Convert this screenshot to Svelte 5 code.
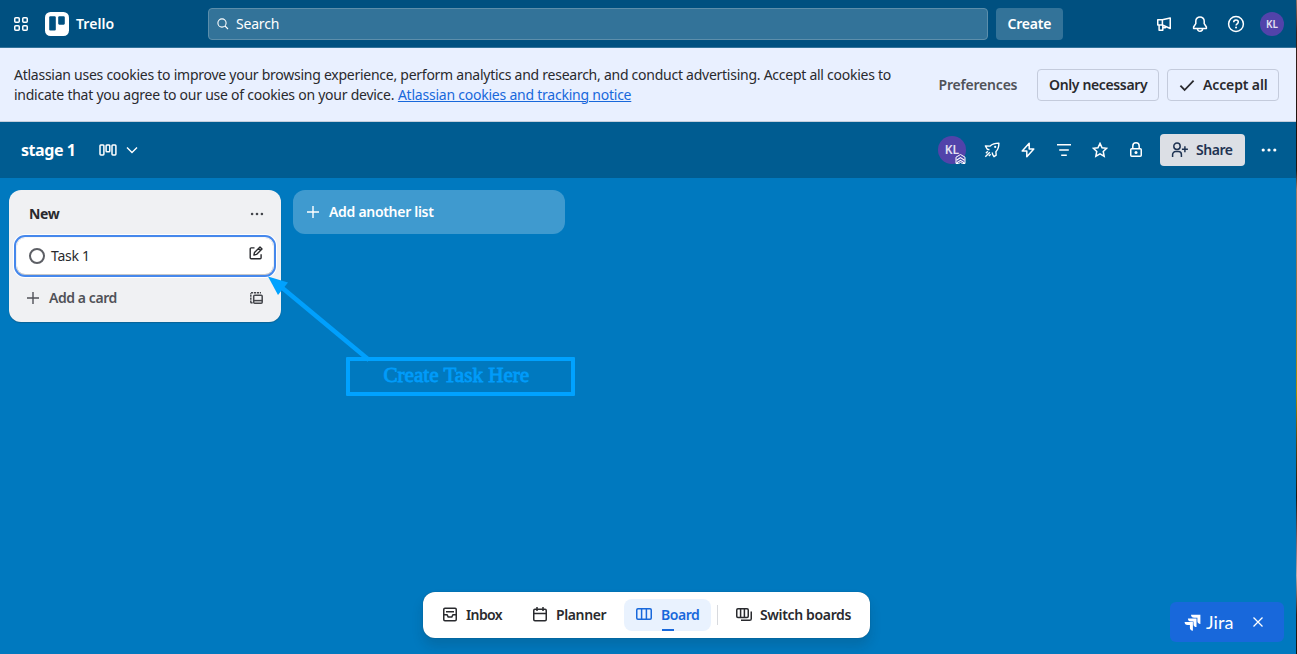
<script>
  let tab = $state('Board');
</script>

{#snippet label(text, width, spacing, cls = '')}
  <span class="label {cls}" style="width:{width}px;letter-spacing:{spacing}px">{text}</span>
{/snippet}

<div class="screen">
  <div class="app">
    <header class="top">
      <svg class="apps" width="16" height="16" viewBox="0 0 16 16" fill="none" stroke="#fff" stroke-width="1.5">
        <rect x="1.75" y="1.75" width="4.5" height="4.5" rx="1" /><rect x="9.75" y="1.75" width="4.5" height="4.5" rx="1" />
        <rect x="1.75" y="9.75" width="4.5" height="4.5" rx="1" /><rect x="9.75" y="9.75" width="4.5" height="4.5" rx="1" />
      </svg>
      <svg class="logo" width="24" height="24" viewBox="0 0 24 24">
        <rect width="24" height="24" rx="5.5" fill="#fff" />
        <rect x="4.2" y="4.3" width="6.6" height="14.2" rx="1.1" fill="#005080" /><rect x="13.2" y="4.3" width="6.6" height="8.4" rx="1.1" fill="#005080" />
      </svg>
      {@render label('Trello', 40, 0.05, 'med')}
      <div class="search">
        <svg width="12" height="12" viewBox="0 0 12 12" fill="none" stroke="#fff" stroke-width="1.1"><circle cx="5" cy="5" r="4.1" /><path d="M8 8l3 3" /></svg>
        {@render label('Search', 44, -0.2)}
      </div>
      <button class="create">{@render label('Create', 44, -0.22, 'med')}</button>
      <div class="tools">
        <svg width="16" height="16" viewBox="0 0 16 16" fill="none" stroke="#fff" stroke-width="1.5" stroke-linejoin="round">
          <path d="M6.4 3.8H1.75V9H6.4zM6.4 3.8L14.25 1.9v10.6L6.4 9M3.1 9.2v5.05h3.7V9.4M7 11.8h2.3v-1.4" />
        </svg>
        <svg width="16" height="16" viewBox="0 0 16 16" fill="none" stroke="#fff" stroke-width="1.5" stroke-linejoin="round">
          <path d="M8 .9a4.2 4.2 0 0 0-4.2 4.2v2.6L1.6 11v1.5h12.8V11l-2.2-3.3V5.1A4.2 4.2 0 0 0 8 .9zM5.4 12.8a2.6 2.4 0 0 0 5.2 0" />
        </svg>
        <svg width="18" height="18" viewBox="0 0 18 18" fill="none" stroke="#fff" stroke-width="1.5">
          <circle cx="9" cy="9" r="7.4" /><path d="M6.7 7.3C6.7 5.8 7.7 5 9 5s2.3.8 2.3 2.1c0 1.7-2.2 1.7-2.2 3.4" /><circle cx="9.05" cy="12.6" r="1" fill="#fff" stroke="none" />
        </svg>
        <span class="avatar small">KL</span>
      </div>
    </header>

    <section class="cookies">
      <p>
        <span class="line1">Atlassian uses cookies to improve your browsing experience, perform analytics and research, and conduct advertising. Accept all cookies to</span><br />
        <span class="line2">indicate that you agree to our use of cookies on your device.</span>
        <a href="#notice">Atlassian cookies and tracking notice</a>
      </p>
      <button class="plain">{@render label('Preferences', 79, -0.2, 'med')}</button>
      <button class="outlined">{@render label('Only necessary', 98, -0.36, 'med')}</button>
      <button class="outlined accept">
        <svg width="16" height="16" viewBox="0 0 16 16" fill="none" stroke="#292a2e" stroke-width="1.8"><path d="M1.4 8.7L5.6 13 14.6 3.6" /></svg>
        {@render label('Accept all', 64, -0.13, 'med')}
      </button>
    </section>

    <section class="boardbar">
      <h1>stage 1</h1>
      <svg class="view" width="18" height="12" viewBox="0 0 18 12" fill="none" stroke="#fff" stroke-width="1.5">
        <rect x="1" y=".9" width="3.9" height="10" rx=".8" /><rect x="7.1" y=".9" width="3.7" height="6.8" rx=".8" /><rect x="13" y=".9" width="3.9" height="10" rx=".8" />
      </svg>
      <svg class="chev" width="12" height="8" viewBox="0 0 12 8" fill="none" stroke="#fff" stroke-width="1.4"><path d="M1 1.4l5 5 5-5" /></svg>
      <div class="actions">
        <span class="avatar">KL
          <svg class="rank" width="11" height="10" viewBox="0 0 11 10"><path d="M1 3.2L5.5.5 10 3.2V9.5H7.4L5.5 8.4 3.6 9.5H1z" fill="#4d4bab" stroke="#fff" stroke-width="1" /><path d="M1.5 6.2l4-2.6 4 2.6M1.5 9l4-2.6 4 2.6" fill="none" stroke="#fff" stroke-width="1.1" /></svg>
        </span>
        <svg width="16" height="16" viewBox="0 0 16 16" fill="none" stroke="#fff" stroke-width="1.4" stroke-linejoin="round">
          <path d="M3.4 7.4L1.4 3.9 6.2 4.1C8.2 2 10.8 1.1 14.9 1.1 14.9 5.2 14 7.8 11.9 9.8L12.2 13.2 10 14.7 8.6 12.4M3.2 7.3l2.2.4M8.6 12.6L8.3 10.5M5.8 10.2L1.3 14.7M3.8 9.3L1.9 11.2M6.7 12.2L4.8 14.1" /><circle cx="11.2" cy="4.9" r="1.1" fill="#fff" stroke="none" />
        </svg>
        <svg width="16" height="16" viewBox="0 0 16 16" fill="none" stroke="#fff" stroke-width="1.5" stroke-linejoin="round"><path d="M9.2 1.2L2.2 9h4.6v5.8L13.8 7H9.2z" /></svg>
        <svg width="16" height="16" viewBox="0 0 16 16" fill="none" stroke="#fff" stroke-width="1.5"><path d="M1 2.7h14M3.2 8h9.6M5.2 13.3h5.6" /></svg>
        <svg width="16" height="16" viewBox="0 0 16 16" fill="none" stroke="#fff" stroke-width="1.5"><path d="M8 1.4l2.05 4.3 4.6.6-3.4 3.2.9 4.7L8 11.9l-4.15 2.3.9-4.7L1.35 6.3l4.6-.6z" /></svg>
        <svg width="16" height="16" viewBox="0 0 16 16" fill="none" stroke="#fff" stroke-width="1.5"><rect x="2.75" y="6.75" width="10.5" height="7.5" rx="1" /><path d="M4.8 6.5V4a3.2 3.2 0 0 1 6.4 0v2.5" /><circle cx="8" cy="10.5" r="1.5" fill="#fff" stroke="none" /></svg>
        <button class="share">
          <svg width="18" height="16" viewBox="0 0 18 16" fill="none" stroke="#1f3352" stroke-width="1.5"><circle cx="6" cy="4.2" r="3.2" /><path d="M1.6 15v-2.4a3 3 0 0 1 3-3h2.8a3 3 0 0 1 3 3V15M13.9 4.3v6M10.9 7.3h6" /></svg>
          {@render label('Share', 37, -0.45, 'med')}
        </button>
        <svg class="dots" width="16" height="4" viewBox="0 0 16 4" fill="#fff"><circle cx="2.2" cy="2" r="1.6" /><circle cx="8" cy="2" r="1.6" /><circle cx="13.8" cy="2" r="1.6" /></svg>
      </div>
    </section>

    <main class="canvas">
      <section class="list">
        <div class="head">
          {@render label('New', 32, -0.4, 'bold')}
          <svg width="14" height="4" viewBox="0 0 14 4" fill="#44464b"><circle cx="2.1" cy="2" r="1.3" /><circle cx="7" cy="2" r="1.3" /><circle cx="11.9" cy="2" r="1.3" /></svg>
        </div>
        <div class="card">
          <span class="ring"></span>
          {@render label('Task 1', 40, -0.25)}
          <svg class="edit" width="14" height="14" viewBox="0 0 14 14" fill="none" stroke="#292a2e" stroke-width="1.4" stroke-linejoin="round">
            <path d="M5.5 1.9H2.2a1 1 0 0 0-1 1v8.9a1 1 0 0 0 1 1h8.9a1 1 0 0 0 1-1V8.3M4.9 9.1l.6-2.7L11 1l2 2-5.5 5.4zM9.4 2.6l2 2" />
          </svg>
        </div>
        <div class="add">
          <svg width="12" height="12" viewBox="0 0 12 12" stroke="#505258" stroke-width="1.4"><path d="M6 0v12M0 6h12" /></svg>
          {@render label('Add a card', 69, -0.43, 'med')}
          <svg class="tpl" width="13" height="12" viewBox="0 0 13 12" fill="none" stroke="#44464b" stroke-width="1.5"><path d="M.8 10.7V1M1 .8h10" stroke-dasharray="2.2 .8" /><path d="M.6 10.8h2" /><rect x="3.7" y="3.2" width="8.5" height="8" rx="1" /><path d="M3.7 8.6h8.5" /></svg>
        </div>
      </section>
      <button class="another">
        <svg width="12" height="12" viewBox="0 0 12 12" stroke="#fff" stroke-width="1.4"><path d="M6 0v12M0 6h12" /></svg>
        {@render label('Add another list', 106, -0.3, 'med')}
      </button>
    </main>

    <svg class="arrow" width="110" height="92" viewBox="0 0 110 92"><path d="M13 11L102 85" stroke="#00a0fd" stroke-width="4.5" /><path d="M1 1.5L21 7.500 11 20z" fill="#00a2ff" /></svg>
    <div class="callout">Create Task Here</div>

    <nav>
      <button class:on={tab === 'Inbox'} class="inbox" onclick={() => (tab = 'Inbox')}>
        <svg width="16" height="16" viewBox="0 0 16 16" fill="none" stroke="currentColor" stroke-width="1.5"><rect x="1.75" y="1.25" width="12.5" height="12.5" rx="1.2" /><path d="M4 4.7h8M2 7.7h3l1.2 2.2h3.6L11 7.7h3" /></svg>
        {@render label('Inbox', 37, -0.6, 'med')}
      </button>
      <button class:on={tab === 'Planner'} class="planner" onclick={() => (tab = 'Planner')}>
        <svg width="16" height="16" viewBox="0 0 16 16" fill="none" stroke="currentColor" stroke-width="1.5"><rect x="1.75" y="2.25" width="12.5" height="11.5" rx="1.2" /><path d="M2 6.4h12M5 0v4M11 0v4" /></svg>
        {@render label('Planner', 51, -0.38, 'med')}
      </button>
      <button class:on={tab === 'Board'} class="board" onclick={() => (tab = 'Board')}>
        <svg width="16" height="16" viewBox="0 0 16 16" fill="none" stroke="currentColor" stroke-width="1.5"><rect x=".75" y="1.75" width="14.5" height="10.5" rx="1.2" /><path d="M5.6 2v10M10.4 2v10" /></svg>
        {@render label('Board', 39, -0.45, 'med')}
      </button>
      <i class="rule"></i>
      <button class="switch">
        <svg width="17" height="16" viewBox="0 0 17 16" fill="none" stroke="currentColor" stroke-width="1.5"><rect x=".75" y="1.75" width="11.5" height="8.7" rx="1.2" /><path d="M4.6 1.8v8.6M8.4 1.8v8.6M15.25 4.5v7.2a1.6 1.6 0 0 1-1.6 1.6H5" /></svg>
        {@render label('Switch boards', 92, -0.35, 'med')}
      </button>
    </nav>

    <aside class="jira">
      <svg width="17" height="17" viewBox="0 0 17 17" fill="#fff"><path d="M7 .8h9.4v9.1c-2 0-3-1.2-3-2.9V3.8h-3.1C8.3 3.8 7 2.8 7 .8z" /><path d="M3.9 4.4H12.5v8.7c-2 0-3-1.2-3-2.9V7.4H6.9c-2 0-3-1-3-3z" /><path d="M.6 8h8.3v8.7c-2 0-3-1.2-3-2.9V11H3.6c-2 0-3-1-3-3z" /></svg>
      <span>Jira</span>
      <svg class="x" width="10" height="10" viewBox="0 0 10 10" stroke="#fff" stroke-width="1.3"><path d="M.5.5l9 9M9.5.5l-9 9" /></svg>
    </aside>
  </div>
  <div class="edge"></div>
</div>

<style>
  :global(body) { overflow: hidden; }
  .screen { display: flex; width: 1297px; height: 654px; font: 400 14px/20px "Noto Sans", sans-serif; color: #292a2e; }
  .app { position: relative; width: 1296px; height: 654px; background: #0079bf; display: flex; flex-direction: column; }
  .edge { width: 1px; background: linear-gradient(#8c6d63 0, #39211c 5%, #1c100b 20%, #25160f 26%, #967765 29%, #896f49 46%, #a38a05 60%, #554216 68%, #1d1711 76%, #806e7b 84%, #b5a7a5 88%, #311c15 94%, #17120e); }
  button { font: inherit; color: inherit; border: 0; background: none; padding: 0; margin: 0; display: flex; align-items: center; box-sizing: border-box; }
  svg { display: block; flex: none; }
  .label { display: block; flex: none; white-space: nowrap; text-align: left; }
  .med { font-weight: 600; }
  .bold { font-weight: 700; }

  .top { height: 48px; box-sizing: border-box; background: #005080; border-bottom: 1px solid #33739b; display: flex; align-items: center; color: #fff; padding: 1px 12px 0 13px; flex: none; }
  .logo { margin: 0 7px 0 16px; }
  .search { margin-left: 92px; width: 780px; height: 32px; box-sizing: border-box; border: 1px solid #5c8eab; border-radius: 4px; background: #337399; display: flex; align-items: center; gap: 7px; padding-left: 8px; }
  .create { margin-left: 8px; width: 67px; height: 32px; border-radius: 4px; background: #337399; justify-content: center; }
  .tools { margin-left: auto; display: flex; align-items: center; gap: 20px; }
  .tools svg:nth-child(3) { margin: 0 -1px; }
  .avatar { position: relative; width: 28px; height: 28px; border-radius: 50%; background: #5243aa; color: #e4e1f2; font: 600 12px/28px "Noto Sans", sans-serif; text-align: center; }
  .small { width: 24px; height: 24px; line-height: 24px; font-size: 10px; margin-left: -4px; }

  .cookies { height: 74px; box-sizing: border-box; background: #e9f0ff; border-bottom: 1px solid #c3cedc; display: flex; align-items: center; padding: 0 18px 0 14px; flex: none; }
  p { margin: 0 47.5px 0 0; width: 877px; white-space: nowrap; flex: none; }
  .line1 { letter-spacing: -0.257px; }
  .line2 { letter-spacing: -0.25px; }
  a { color: #1868db; letter-spacing: -0.23px; text-underline-offset: 1px; text-decoration-thickness: 1px; }
  .plain { color: #505258; margin-right: 19.5px; }
  .outlined { height: 32px; border: 1px solid #c4cbdc; border-radius: 4px; width: 122px; padding-left: 11px; flex: none; }
  .accept { width: 112px; margin-left: 8px; gap: 8px; }

  .boardbar { height: 56px; background: #005c91; display: flex; align-items: center; padding-left: 21px; flex: none; }
  h1 { margin: 0; width: 78px; font: 700 16px/24px "Noto Sans", sans-serif; letter-spacing: -0.43px; color: #fff; }
  .chev { margin-left: 9px; }
  .actions { margin-left: auto; display: flex; align-items: center; gap: 20px; padding-right: 19px; }
  .actions .avatar { margin-right: -2px; }
  .rank { position: absolute; right: 0; bottom: 0; }
  .share { width: 85px; height: 32px; border-radius: 4px; background: #dcdfe5; color: #1f3352; gap: 7px; padding-left: 11px; margin-left: -4px; }
  .dots { margin-left: -4px; }

  .canvas { display: flex; align-items: flex-start; gap: 12px; padding: 12px 9px; }
  .list { width: 272px; height: 132px; box-sizing: border-box; border-radius: 12px; background: #f0f1f3; padding: 8px; box-shadow: 0 1px 1px #1e1f2140; }
  .head { height: 32px; display: flex; align-items: center; justify-content: space-between; padding: 0 9px 0 12px; margin-bottom: 8px; }
  .card { height: 36px; border-radius: 8px; background: #fff; outline: 2px solid #4688ec; outline-offset: 1px; box-shadow: 0 1px 1px #1e1f2140, 0 0 1px #1e1f214f, 0 0 0 4px #fff; display: flex; align-items: center; padding: 0 10px 0 12px; }
  .ring { width: 16px; height: 16px; box-sizing: border-box; border: 2px solid #5d5f65; border-radius: 50%; margin-right: 6px; }
  .edit { margin: 0 0 6px auto; }
  .add { display: flex; align-items: center; color: #505258; height: 32px; margin-top: 8px; padding: 0 10px; gap: 10px; }
  .tpl { margin-left: auto; }
  .another { width: 272px; height: 44px; border-radius: 12px; background: #3f9acf; color: #fff; gap: 10px; padding-left: 14px; }

  .arrow { position: absolute; left: 267px; top: 275px; }
  .callout { position: absolute; left: 346px; top: 357px; width: 229px; height: 39px; box-sizing: border-box; border: 4px solid #00a2ff; border-radius: 1px; padding-left: 33.5px; font: 400 21.1px/29px "Liberation Serif", serif; color: #009cfa; -webkit-text-stroke: 0.85px #009cfa; white-space: nowrap; }

  nav { position: absolute; left: 423px; top: 592px; width: 447px; height: 46px; box-sizing: border-box; border-radius: 12px; background: #fff; box-shadow: 0 0 1px #1e1f2180, 0 8px 12px #1e1f2126; display: flex; align-items: center; padding-left: 7px; }
  nav button { height: 32px; border-radius: 8px; gap: 8px; padding: 0 12px; position: relative; }
  .planner { margin-left: 5px; }
  .board { margin-left: 5px; width: 87px; }
  .board svg { margin-right: 1px; }
  .on { background: #e9f2fe; color: #1868db; }
  .on::after { content: ''; position: absolute; left: 38px; bottom: 0; width: 12px; height: 2px; background: #1868db; }
  .rule { width: 1px; height: 20px; background: #d8dade; margin: 0 6px; }
  .switch svg { margin-right: -1px; }

  .jira { position: absolute; left: 1170px; top: 602px; width: 114px; height: 40px; box-sizing: border-box; border-radius: 6px; background: #1868db; color: #fff; display: flex; align-items: center; padding-left: 14px; }
  .jira span { margin: 0 0 0 5px; width: 47px; font: 400 18px/40px Lato, sans-serif; letter-spacing: 0.1px; }
</style>
